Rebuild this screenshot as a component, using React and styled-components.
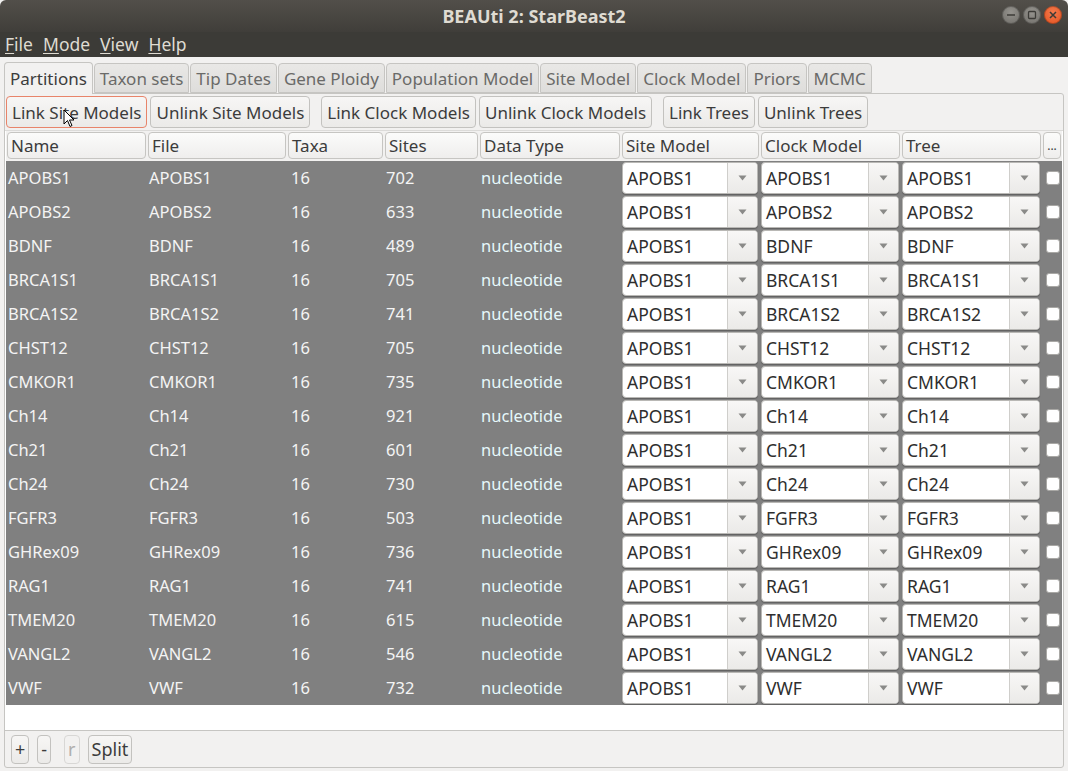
import React from 'react'
import styled, { createGlobalStyle } from 'styled-components'

const GlobalStyle = createGlobalStyle`
	html, body {
		margin: 0;
		padding: 0;
		background: #f2f1f0;
	}
	body {
		font-family: 'Noto Sans', 'Open Sans', sans-serif;
		font-size: 15px;
		color: #3c3c3c;
	}
`

const rows = [
	['APOBS1', 702],
	['APOBS2', 633],
	['BDNF', 489],
	['BRCA1S1', 705],
	['BRCA1S2', 741],
	['CHST12', 705],
	['CMKOR1', 735],
	['Ch14', 921],
	['Ch21', 601],
	['Ch24', 730],
	['FGFR3', 503],
	['GHRex09', 736],
	['RAG1', 741],
	['TMEM20', 615],
	['VANGL2', 546],
	['VWF', 732],
]

const tabs = ['Partitions', 'Taxon sets', 'Tip Dates', 'Gene Ploidy', 'Population Model', 'Site Model', 'Clock Model', 'Priors', 'MCMC']
const columns = ['Name', 'File', 'Taxa', 'Sites', 'Data Type', 'Site Model', 'Clock Model', 'Tree', '...']
const colTemplate = '141px 140px 97px 95px 142px 139px 141px 141px 20px'

function WindowButtons() {
	return (
		<WinButtons>
			<WinBtn>
				<svg width='18' height='18' viewBox='0 0 18 18'>
					<line x1='5' y1='9' x2='13' y2='9' stroke='#3c3b37' strokeWidth='1.5' />
				</svg>
			</WinBtn>
			<WinBtn>
				<svg width='18' height='18' viewBox='0 0 18 18'>
					<rect x='5.5' y='5.5' width='7' height='7' rx='1' fill='none' stroke='#3c3b37' strokeWidth='1.3' />
				</svg>
			</WinBtn>
			<WinBtn close>
				<svg width='18' height='18' viewBox='0 0 18 18'>
					<path d='M6 6 L12 12 M12 6 L6 12' stroke='#3c3b37' strokeWidth='1.5' />
				</svg>
			</WinBtn>
		</WinButtons>
	)
}

function Combo({ value }) {
	return (
		<ComboBox>
			<ComboText>{value}</ComboText>
			<ComboArrow>
				<svg width='9' height='6' viewBox='0 0 9 6'>
					<path d='M0.5 0.5 L8.5 0.5 L4.5 5.5 Z' fill='#8a8a88' />
				</svg>
			</ComboArrow>
		</ComboBox>
	)
}

function Mnemonic({ text }) {
	return (
		<MenuItem>
			<u>{text[0]}</u>
			{text.slice(1)}
		</MenuItem>
	)
}

export default function App() {
	return (
		<Window>
			<GlobalStyle />
			<TitleBar>
				<Title>BEAUti 2: StarBeast2</Title>
				<WindowButtons />
			</TitleBar>
			<MenuBar>
				<Mnemonic text='File' />
				<Mnemonic text='Mode' />
				<Mnemonic text='View' />
				<Mnemonic text='Help' />
			</MenuBar>
			<Body>
				<TabRow>
					{tabs.map((t, i) => (
						<Tab key={t} active={i === 0}>
							{t}
						</Tab>
					))}
				</TabRow>
				<Panel>
					<ButtonRow>
						<Button focused>
							Link Site Models
							<Cursor viewBox='0 0 12 19' width='12' height='19'>
								<path d='M1 1 L1 15 L4.5 11.5 L7 17.5 L9 16.5 L6.5 11 L11 11 Z' fill='#fff' stroke='#000' strokeWidth='1' />
							</Cursor>
						</Button>
						<Button>Unlink Site Models</Button>
						<Spacer />
						<Button>Link Clock Models</Button>
						<Button>Unlink Clock Models</Button>
						<Spacer />
						<Button>Link Trees</Button>
						<Button>Unlink Trees</Button>
					</ButtonRow>
					<TablePane>
						<HeaderRow>
							{columns.map(c => (
								<HeaderCell key={c} small={c === '...'}>
									{c}
								</HeaderCell>
							))}
						</HeaderRow>
						{rows.map(([name, sites]) => (
							<Row key={name}>
								<Cell>{name}</Cell>
								<Cell>{name}</Cell>
								<Cell indent>16</Cell>
								<Cell>{sites}</Cell>
								<Cell accent>nucleotide</Cell>
								<ComboCell>
									<Combo value='APOBS1' />
								</ComboCell>
								<ComboCell>
									<Combo value={name} />
								</ComboCell>
								<ComboCell>
									<Combo value={name} />
								</ComboCell>
								<CheckCell>
									<Check />
								</CheckCell>
							</Row>
						))}
						<Filler />
					</TablePane>
					<BottomBar>
						<SmallButton>+</SmallButton>
						<SmallButton>-</SmallButton>
						<SmallButton disabled>r</SmallButton>
						<SmallButton>Split</SmallButton>
					</BottomBar>
				</Panel>
			</Body>
		</Window>
	)
}

const Window = styled.div`
	width: 1068px;
	height: 771px;
	display: flex;
	flex-direction: column;
	overflow: hidden;
	background: #f2f1f0;
`

const TitleBar = styled.div`
	height: 32px;
	flex: none;
	background: linear-gradient(#524f4a, #403e3a);
	border-radius: 6px 6px 0 0;
	display: flex;
	align-items: center;
	justify-content: center;
	position: relative;
`

const Title = styled.div`
	color: #dfdbd2;
	font-family: 'Noto Sans', sans-serif;
	font-weight: bold;
	font-size: 18px;
`

const WinButtons = styled.div`
	position: absolute;
	right: 6px;
	top: 6px;
	display: flex;
	gap: 3px;
`

const WinBtn = styled.div`
	width: 18px;
	height: 18px;
	border-radius: 50%;
	background: ${p => (p.close ? 'radial-gradient(circle at 50% 35%, #f47a4d, #e2501d)' : 'radial-gradient(circle at 50% 35%, #95938e, #6f6d68)')};
	box-shadow: inset 0 0 0 1px rgba(0, 0, 0, 0.25);
	display: flex;
`

const MenuBar = styled.div`
	height: 25px;
	flex: none;
	background: #3c3b37;
	display: flex;
	align-items: center;
	padding-left: 5px;
	gap: 10px;
`

const MenuItem = styled.span`
	color: #dfdbd2;
	font-size: 17.5px;
	line-height: 25px;
	u {
		text-decoration-thickness: 1px;
		text-underline-offset: 2px;
	}
`

const Body = styled.div`
	flex: 1;
	display: flex;
	flex-direction: column;
	padding: 4px 4px 3px 4px;
	min-height: 0;
`

const TabRow = styled.div`
	display: flex;
	align-items: flex-end;
	height: 32px;
	gap: 1px;
`

const Tab = styled.div`
	height: ${p => (p.active ? '32px' : '30px')};
	box-sizing: border-box;
	padding: 0 5px;
	display: flex;
	align-items: center;
	font-size: 17px;
	color: ${p => (p.active ? '#3c3c3c' : '#6a6a68')};
	background: ${p => (p.active ? '#f2f1f0' : 'linear-gradient(#e9e8e6, #dedddb)')};
	border: 1px solid #c6c5c2;
	border-bottom: ${p => (p.active ? 'none' : '1px solid #c6c5c2')};
	border-radius: 4px 4px 0 0;
	position: relative;
	z-index: ${p => (p.active ? 1 : 0)};
	margin-bottom: ${p => (p.active ? '-1px' : '0')};
	white-space: nowrap;
`

const Panel = styled.div`
	flex: 1;
	display: flex;
	flex-direction: column;
	border: 1px solid #c6c5c2;
	border-radius: 0 3px 3px 3px;
	min-height: 0;
`

const ButtonRow = styled.div`
	display: flex;
	align-items: center;
	height: 36px;
	padding: 0 1px;
	gap: 3px;
`

const Spacer = styled.div`
	width: 5px;
`

const Button = styled.div`
	position: relative;
	height: 32px;
	box-sizing: border-box;
	padding: 0 5px;
	display: flex;
	align-items: center;
	font-size: 17px;
	color: #3c3c3c;
	background: linear-gradient(#f7f6f5, #ebeae8);
	border: 1px solid ${p => (p.focused ? '#e8846a' : '#c3c2bf')};
	border-radius: 4px;
	white-space: nowrap;
`

const Cursor = styled.svg`
	position: absolute;
	left: 56px;
	top: 12px;
`

const TablePane = styled.div`
	flex: 1;
	display: flex;
	flex-direction: column;
	background: #fff;
	border-bottom: 1px solid #c6c5c2;
	border-top: 1px solid #dcdbd9;
	padding: 0 1px 0 1px;
	min-height: 0;
`

const HeaderRow = styled.div`
	display: grid;
	grid-template-columns: ${colTemplate};
	height: 30px;
	background: #f2f1f0;
`

const HeaderCell = styled.div`
	margin: 1px 1px 2px 1px;
	box-sizing: border-box;
	border: 1px solid #c6c5c2;
	border-radius: 4px;
	background: linear-gradient(#fbfbfa, #efeeed);
	display: flex;
	align-items: center;
	justify-content: ${p => (p.small ? 'center' : 'flex-start')};
	padding: 0 3px;
	font-size: ${p => (p.small ? '12px' : '17px')};
	color: #3c3c3c;
	overflow: hidden;
	white-space: nowrap;
`

const Row = styled.div`
	display: grid;
	grid-template-columns: ${colTemplate};
	height: 34px;
	background: #808080;
`

const Cell = styled.div`
	display: flex;
	align-items: center;
	padding-left: ${p => (p.indent ? '4px' : '2px')};
	padding-bottom: 1px;
	color: ${p => (p.accent ? '#e6f8fb' : '#f4f4f4')};
	font-size: 16.5px;
	white-space: nowrap;
`

const ComboCell = styled.div`
	display: flex;
	align-items: center;
	padding: 0 2px 0 1px;
`

const ComboBox = styled.div`
	flex: 1;
	height: 32px;
	box-sizing: border-box;
	display: flex;
	background: #fff;
	border: 1px solid #b9b8b5;
	border-radius: 4px;
	box-shadow: 0 1px 1px rgba(0, 0, 0, 0.25);
	overflow: hidden;
`

const ComboText = styled.div`
	flex: 1;
	display: flex;
	align-items: center;
	padding-left: 4px;
	padding-bottom: 1px;
	font-size: 17.5px;
	color: #2e2e2e;
	white-space: nowrap;
	overflow: hidden;
`

const ComboArrow = styled.div`
	width: 29px;
	flex: none;
	border-left: 1px solid #cfcecb;
	background: linear-gradient(#f8f7f6, #ebeae8);
	display: flex;
	align-items: center;
	justify-content: center;
`

const CheckCell = styled.div`
	display: flex;
	align-items: center;
	justify-content: center;
	padding-left: 2px;
`

const Check = styled.div`
	width: 14px;
	height: 14px;
	box-sizing: border-box;
	background: #fff;
	border: 1px solid #a9a8a5;
	border-radius: 3px;
`

const Filler = styled.div`
	flex: 1;
	background: #fff;
`

const BottomBar = styled.div`
	height: 36px;
	display: flex;
	align-items: center;
	padding-left: 6px;
	gap: 8px;
`

const SmallButton = styled.div`
	height: 29px;
	box-sizing: border-box;
	padding: 0 3px;
	display: flex;
	align-items: center;
	font-size: 18px;
	color: ${p => (p.disabled ? '#b0afad' : '#3c3c3c')};
	background: ${p => (p.disabled ? '#f2f1f0' : 'linear-gradient(#f7f6f5, #ebeae8)')};
	border: 1px solid ${p => (p.disabled ? '#d8d7d5' : '#c3c2bf')};
	border-radius: 4px;
	margin-left: ${p => (p.disabled ? '5px' : '0')};
`
